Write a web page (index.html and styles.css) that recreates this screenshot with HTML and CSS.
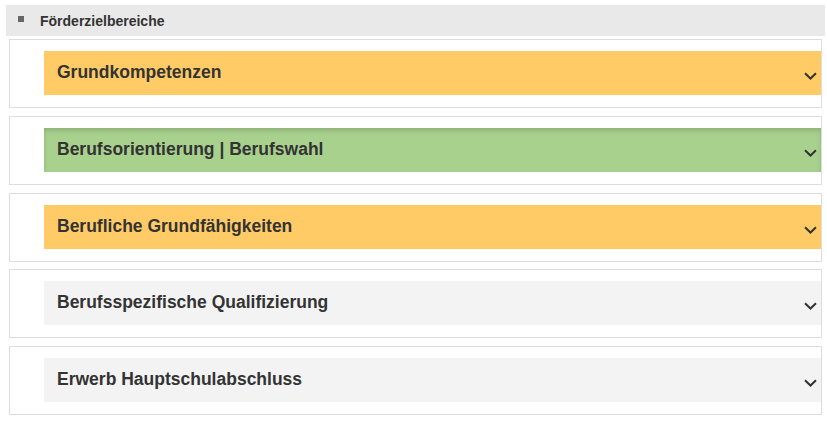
FILE: index.html
```html
<!DOCTYPE html>
<html lang="de">
<head>
  <meta charset="UTF-8" />
  <meta name="viewport" content="width=device-width, initial-scale=1.0"/>
  <title>Förderzielbereiche</title>
  <link rel="stylesheet" href="styles.css">
</head>
<body>
  <div class="panel">
    <div class="panel-head">
      <span class="bullet"></span>
      <span class="panel-title">Förderzielbereiche</span>
    </div>

    <div class="areas">
      <div class="area">
        <div class="area-bar orange">
          <span class="area-title">Grundkompetenzen</span>
          <svg class="chevron" width="13" height="8" viewBox="0 0 13 8"><path d="M1 1.2 L6.5 6.5 L12 1.2" fill="none" stroke="#333" stroke-width="2"/></svg>
        </div>
      </div>

      <div class="area">
        <div class="area-bar green active">
          <span class="area-title">Berufsorientierung | Berufswahl</span>
          <svg class="chevron" width="13" height="8" viewBox="0 0 13 8"><path d="M1 1.2 L6.5 6.5 L12 1.2" fill="none" stroke="#333" stroke-width="2"/></svg>
        </div>
      </div>

      <div class="area">
        <div class="area-bar orange">
          <span class="area-title">Berufliche Grundfähigkeiten</span>
          <svg class="chevron" width="13" height="8" viewBox="0 0 13 8"><path d="M1 1.2 L6.5 6.5 L12 1.2" fill="none" stroke="#333" stroke-width="2"/></svg>
        </div>
      </div>

      <div class="area">
        <div class="area-bar grey">
          <span class="area-title">Berufsspezifische Qualifizierung</span>
          <svg class="chevron" width="13" height="8" viewBox="0 0 13 8"><path d="M1 1.2 L6.5 6.5 L12 1.2" fill="none" stroke="#333" stroke-width="2"/></svg>
        </div>
      </div>

      <div class="area">
        <div class="area-bar grey">
          <span class="area-title">Erwerb Hauptschulabschluss</span>
          <svg class="chevron" width="13" height="8" viewBox="0 0 13 8"><path d="M1 1.2 L6.5 6.5 L12 1.2" fill="none" stroke="#333" stroke-width="2"/></svg>
        </div>
      </div>
    </div>
  </div>
</body>
</html>
```

FILE: styles.css
```css
body {
  margin: 0;
  padding: 0;
  font-family: "Liberation Sans", Arial, sans-serif;
  color: #333;
  background: #fff;
}
.panel {
  margin: 5px 2px 0 6px;
}
.panel-head {
  height: 31px;
  background: #e9e9e9;
  display: flex;
  align-items: center;
  padding-left: 12px;
}
.bullet {
  width: 6px;
  height: 6px;
  background: #666;
  margin-right: 16px;
  margin-top: -3px;
}
.panel-title {
  font-size: 14px;
  font-weight: bold;
  color: #333;
  margin-top: 1px;
}
.areas {
  padding: 3px 3px 0 3px;
}
.area {
  border: 1px solid #ddd;
  padding: 11px 0 12px 34px;
  margin-bottom: 7.75px;
}
.area-bar {
  height: 44px;
  box-sizing: border-box;
  display: flex;
  align-items: flex-start;
  padding: 12px 4px 0 13px;
}
.area-title {
  font-size: 17.5px;
  font-weight: bold;
  line-height: 19.5px;
}
.chevron {
  margin-left: auto;
  margin-top: 9px;
}
.orange {
  background: #ffcb66;
}
.green {
  background: #a9d18e;
}
.grey {
  background: #f3f3f3;
}
.active {
  box-shadow: inset 0 3px 5px rgba(0, 0, 0, 0.15);
}
```
